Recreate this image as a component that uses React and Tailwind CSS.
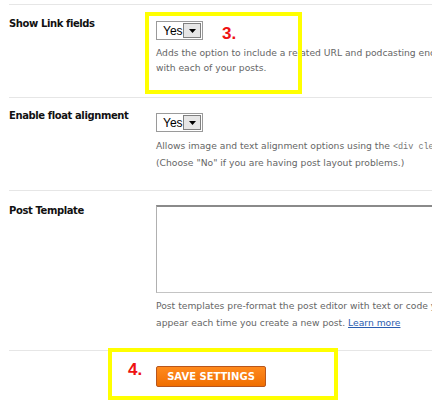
import React from 'react';

const FONT = "font-['DejaVu_Sans',sans-serif]";

function YesSelect() {
    return (
        <div className="flex items-center w-[47px] h-[19px] border border-[#9a9a9a] bg-white pl-[6px] pr-[1px] justify-between">
            <span className="font-['Liberation_Sans',Arial,sans-serif] text-[12px] text-black leading-none">Yes</span>
            <span className="flex items-center justify-center w-[18px] h-[15px] border border-[#808080] bg-[#e6e6e6]">
                <svg width="7" height="4" viewBox="0 0 7 4"><path d="M0 0 H7 L3.5 4 Z" fill="#000" /></svg>
            </span>
        </div>
    );
}

function Desc({ children, className = '' }) {
    return (
        <p className={`text-[9.2px] text-[#666] whitespace-nowrap ${className}`}>{children}</p>
    );
}

function Row({ label, children, className = '', labelPad = 'pt-[12px]', fieldPad = 'pt-[16px]' }) {
    return (
        <div className={`flex border-t border-[#e6e6e6] ${className}`}>
            <div className={`w-[147px] shrink-0 text-[10px] font-bold text-[#111] leading-[14px] tracking-[-0.4px] ${labelPad}`}>{label}</div>
            <div className={`flex-1 min-w-0 ${fieldPad}`}>{children}</div>
        </div>
    );
}

export default function App() {
    return (
        <div className={`relative w-[432px] h-[401px] bg-white overflow-hidden ${FONT}`}>
            <div className="pl-[9px] pt-[4px]">
                <Row label="Show Link fields" className="h-[93px]">
                    <YesSelect />
                    <Desc className="mt-[5px] leading-[15px]">
                        Adds the option to include a related URL and podcasting enclosure<br />
                        with each of your posts.
                    </Desc>
                </Row>
                <Row label="Enable float alignment" className="h-[93px]" labelPad="pt-[11px]" fieldPad="pt-[15px]">
                    <YesSelect />
                    <Desc className="mt-[6px] leading-[15px]">
                        Allows image and text alignment options using the <span className="font-['Liberation_Mono',monospace] text-[8.5px] text-[#777]">&lt;div clear="both"&gt;</span><br />
                        (Choose "No" if you are having post layout problems.)
                    </Desc>
                </Row>
                <Row label="Post Template" className="h-[160px]" labelPad="pt-[13px]" fieldPad="pt-[14px]">
                    <div className="w-[290px] h-[88px] border border-[#c4c4c4] border-t-2 border-t-[#8a8a8a] border-l-[#b0b0b0] bg-white" />
                    <Desc className="mt-[4px] leading-[17px]">
                        Post templates pre-format the post editor with text or code you'd like to<br />
                        appear each time you create a new post. <a className="text-[#2a5db0] underline">Learn more</a>
                    </Desc>
                </Row>
                <div className="border-t border-[#e6e6e6] flex pt-[15px]">
                    <div className="w-[147px] shrink-0" />
                    <button className="w-[110px] h-[21px] bg-gradient-to-b from-[#ff8a1c] to-[#f06e00] border border-[#b8561c] rounded-[2px] text-white text-[10px] font-bold leading-none">
                        SAVE SETTINGS
                    </button>
                </div>
            </div>

            {/* annotation overlays */}
            <div className="absolute left-[145px] top-[12px] w-[157px] h-[82px] border-[4px] border-[#ffff00]" />
            <span className="absolute left-[222px] top-[21px] font-['Liberation_Sans',Arial,sans-serif] text-[17px] font-bold text-[#ee1111]">3.</span>
            <div className="absolute left-[108px] top-[348px] w-[230px] h-[52px] border-[4px] border-[#ffff00]" />
            <span className="absolute left-[128px] top-[357px] font-['Liberation_Sans',Arial,sans-serif] text-[17px] font-bold text-[#ee1111]">4.</span>
        </div>
    );
}
